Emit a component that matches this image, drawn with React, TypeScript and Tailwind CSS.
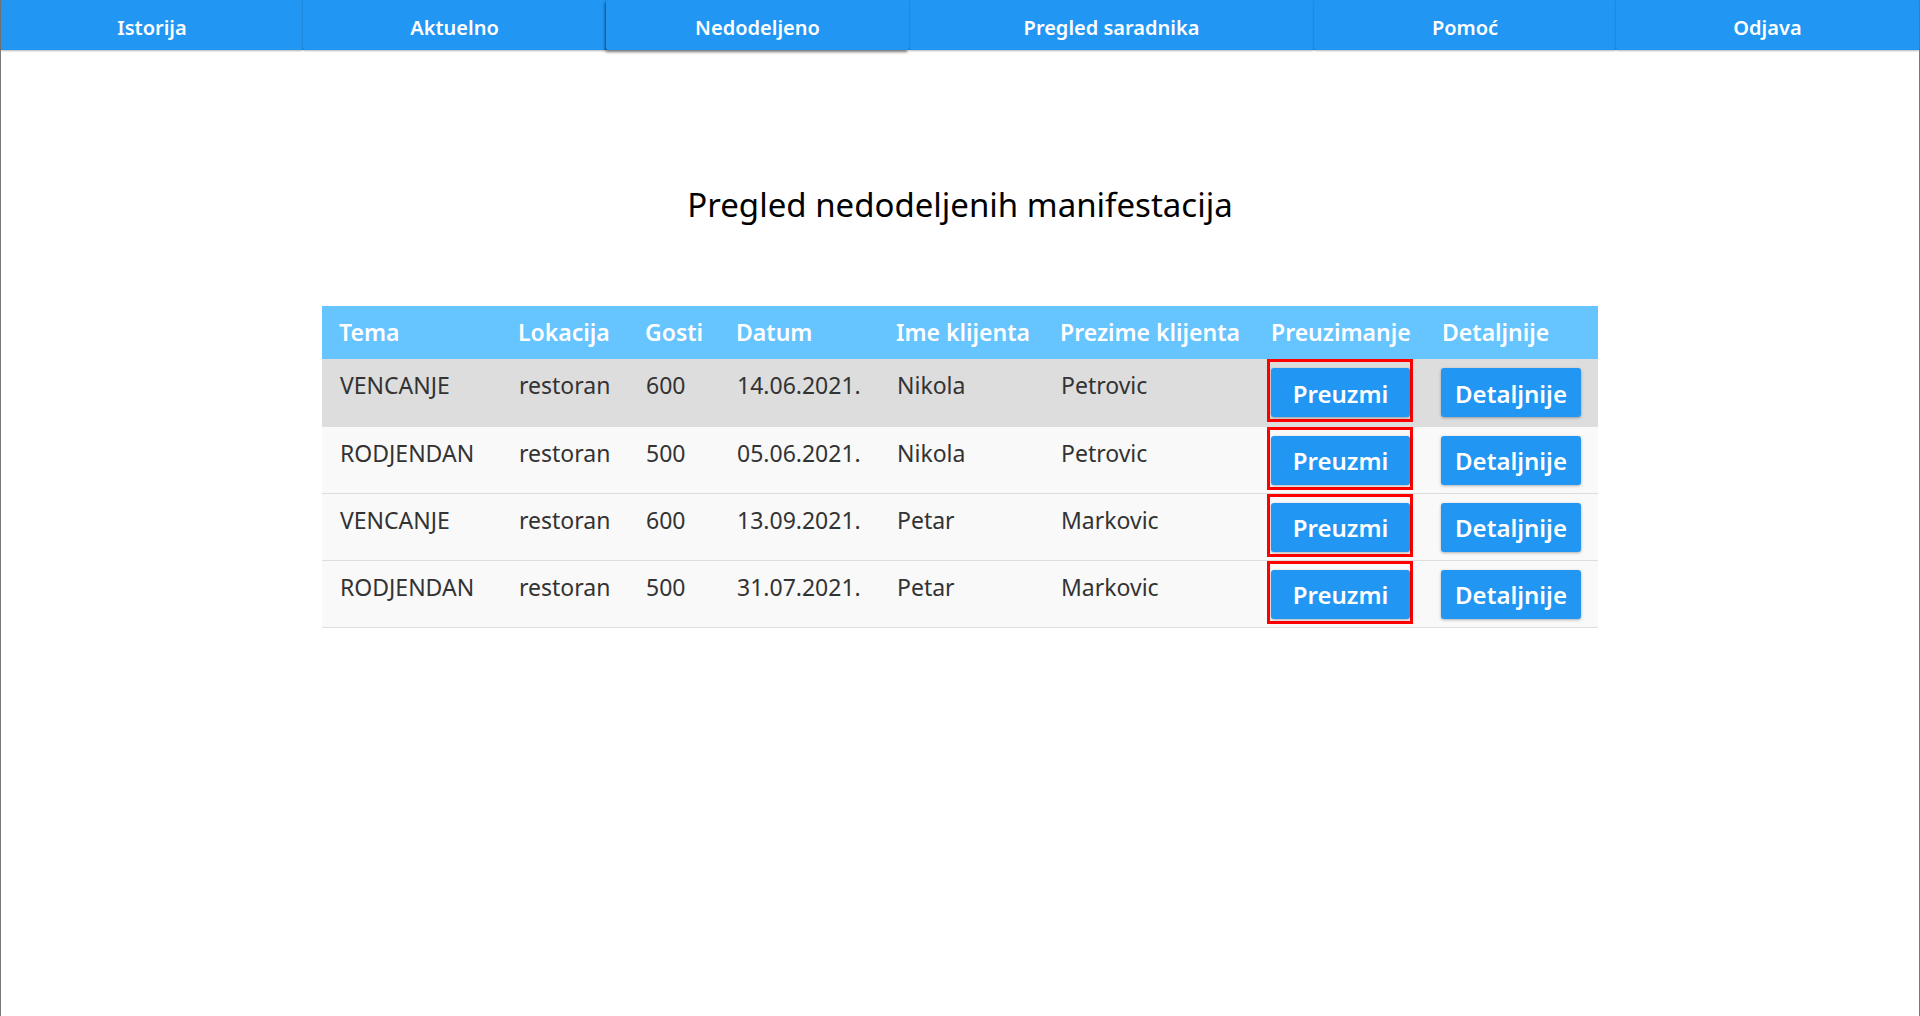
import React from "react";

type Row = {
  tema: string;
  lokacija: string;
  gosti: number;
  datum: string;
  ime: string;
  prezime: string;
};

const tabs = [
  { label: "Istorija", w: "w-[302px]" },
  { label: "Aktuelno", w: "w-[303px]" },
  { label: "Nedodeljeno", w: "w-[303px]", active: true },
  { label: "Pregled saradnika", w: "w-[405px]" },
  { label: "Pomoć", w: "w-[302px]" },
  { label: "Odjava", w: "flex-1" },
];

const rows: Row[] = [
  { tema: "VENCANJE", lokacija: "restoran", gosti: 600, datum: "14.06.2021.", ime: "Nikola", prezime: "Petrovic" },
  { tema: "RODJENDAN", lokacija: "restoran", gosti: 500, datum: "05.06.2021.", ime: "Nikola", prezime: "Petrovic" },
  { tema: "VENCANJE", lokacija: "restoran", gosti: 600, datum: "13.09.2021.", ime: "Petar", prezime: "Markovic" },
  { tema: "RODJENDAN", lokacija: "restoran", gosti: 500, datum: "31.07.2021.", ime: "Petar", prezime: "Markovic" },
];

const headers = [
  { label: "Tema", w: "w-[179px]" },
  { label: "Lokacija", w: "w-[127px]" },
  { label: "Gosti", w: "w-[91px]" },
  { label: "Datum", w: "w-[160px]" },
  { label: "Ime klijenta", w: "w-[164px]" },
  { label: "Prezime klijenta", w: "w-[211px]" },
  { label: "Preuzimanje", w: "w-[171px]" },
  { label: "Detaljnije", w: "w-[173px]" },
];

function NavBar() {
  return (
    <nav className="flex h-[50px] bg-[#2196f3]">
      {tabs.map((t) => (
        <button
          key={t.label}
          className={
            t.w +
            " relative h-full rounded-[2px] bg-[#2196f3] pt-[5px] text-[20px] font-semibold text-white " +
            (t.active
              ? "z-10 shadow-[-1px_2px_3px_rgba(0,0,0,0.55)]"
              : "shadow-[0_1px_2px_rgba(0,0,0,0.3)]")
          }
        >
          {t.label}
        </button>
      ))}
    </nav>
  );
}

function BlueButton({ children, w }: { children: React.ReactNode; w: string }) {
  return (
    <button
      className={
        w +
        " h-[49px] rounded-[3px] bg-[#2196f3] pt-[2px] text-[24px] font-semibold text-white shadow-[0_1px_3px_rgba(0,0,0,0.3)]"
      }
    >
      {children}
    </button>
  );
}

export default function App() {
  return (
    <div className="min-h-[1016px] border-x border-[#7a7a7a] bg-white font-['Noto_Sans',sans-serif]">
      <NavBar />

      <h1 className="mt-[129px] text-center text-[33px] leading-[52px] text-black">
        Pregled nedodeljenih manifestacija
      </h1>

      <table className="mx-auto mt-[75px] w-[1276px] table-fixed border-collapse text-left">
        <thead>
          <tr className="h-[53px] bg-[#66c4ff]">
            {headers.map((h) => (
              <th key={h.label} className={h.w + " pl-[17px] text-[23px] font-semibold text-white"}>
                {h.label}
              </th>
            ))}
          </tr>
        </thead>
        <tbody>
          {rows.map((r, i) => (
            <tr
              key={i}
              className={
                "h-[67px] border-b border-[#dddddd] text-[23px] leading-[32px] text-[#333333] " +
                (i === 0 ? "bg-[#dddddd]" : "bg-[#f9f9f9]")
              }
            >
              <td className="pl-[18px] pt-[10px] align-top">{r.tema}</td>
              <td className="pl-[18px] pt-[10px] align-top">{r.lokacija}</td>
              <td className="pl-[18px] pt-[10px] align-top">{r.gosti}</td>
              <td className="pl-[18px] pt-[10px] align-top">{r.datum}</td>
              <td className="pl-[18px] pt-[10px] align-top">{r.ime}</td>
              <td className="pl-[18px] pt-[10px] align-top">{r.prezime}</td>
              <td className="pl-[13px] align-top">
                <div className="inline-block border-[3px] border-[#ff0000] pb-[2px] pl-px pt-[6px]">
                  <BlueButton w="w-[139px]">Preuzmi</BlueButton>
                </div>
              </td>
              <td className="pl-[16px] pt-[9px] align-top">
                <BlueButton w="w-[140px]">Detaljnije</BlueButton>
              </td>
            </tr>
          ))}
        </tbody>
      </table>
    </div>
  );
}
